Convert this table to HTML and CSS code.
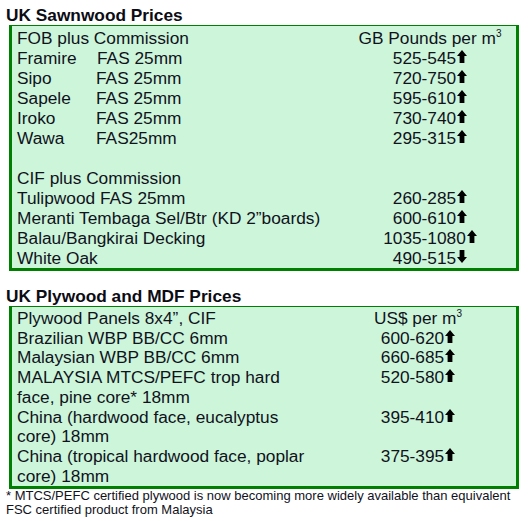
FILE: index.html
```html
<!DOCTYPE html>
<html>
<head>
<meta charset="utf-8">
<link rel="stylesheet" href="styles.css">
</head>
<body>
<svg width="0" height="0" class="defs">
  <defs>
    <symbol id="up" viewBox="0 0 10 13"><path d="M5 0 L10 6 L7.4 6 L7.4 13 L2.6 13 L2.6 6 L0 6 Z"/></symbol>
    <symbol id="down" viewBox="0 0 10 13"><path d="M2.6 0 L7.4 0 L7.4 7 L10 7 L5 13 L0 7 L2.6 7 Z"/></symbol>
  </defs>
</svg>

<h2 class="title">UK Sawnwood Prices</h2>
<div class="box box-saw">
  <div class="row"><span class="span2">FOB plus Commission</span><span class="price">GB Pounds per m<sup class="sup">3</sup></span></div>
  <div class="row"><span>Framire</span><span class="grade grade-f">FAS 25mm</span><span class="price">525-545<svg class="arr"><use href="#up"/></svg></span></div>
  <div class="row"><span>Sipo</span><span class="grade">FAS 25mm</span><span class="price">720-750<svg class="arr"><use href="#up"/></svg></span></div>
  <div class="row"><span>Sapele</span><span class="grade">FAS 25mm</span><span class="price">595-610<svg class="arr"><use href="#up"/></svg></span></div>
  <div class="row"><span>Iroko</span><span class="grade">FAS 25mm</span><span class="price">730-740<svg class="arr"><use href="#up"/></svg></span></div>
  <div class="row"><span>Wawa</span><span class="grade">FAS25mm</span><span class="price">295-315<svg class="arr"><use href="#up"/></svg></span></div>
  <div class="row blank"><span class="span2">&nbsp;</span><span class="price"></span></div>
  <div class="row"><span class="span2">CIF plus Commission</span><span class="price"></span></div>
  <div class="row"><span class="span2">Tulipwood FAS 25mm</span><span class="price">260-285<svg class="arr"><use href="#up"/></svg></span></div>
  <div class="row"><span class="span2">Meranti Tembaga Sel/Btr (KD 2”boards)</span><span class="price">600-610<svg class="arr"><use href="#up"/></svg></span></div>
  <div class="row"><span class="span2">Balau/Bangkirai Decking</span><span class="price">1035-1080<svg class="arr"><use href="#up"/></svg></span></div>
  <div class="row"><span class="span2">White Oak</span><span class="price">490-515<svg class="arr"><use href="#down"/></svg></span></div>
</div>

<h2 class="title title-ply">UK Plywood and MDF Prices</h2>
<div class="box box-ply">
  <div class="prow"><span>Plywood Panels 8x4”, CIF</span><span class="price">US$ per m<sup class="sup">3</sup></span></div>
  <div class="prow"><span>Brazilian WBP BB/CC 6mm</span><span class="price">600-620<svg class="arr"><use href="#up"/></svg></span></div>
  <div class="prow"><span>Malaysian WBP BB/CC 6mm</span><span class="price">660-685<svg class="arr"><use href="#up"/></svg></span></div>
  <div class="prow"><span>MALAYSIA MTCS/PEFC trop hard face, pine core* 18mm</span><span class="price">520-580<svg class="arr"><use href="#up"/></svg></span></div>
  <div class="prow"><span>China (hardwood face, eucalyptus core) 18mm</span><span class="price">395-410<svg class="arr"><use href="#up"/></svg></span></div>
  <div class="prow"><span>China (tropical hardwood face, poplar core) 18mm</span><span class="price">375-395<svg class="arr"><use href="#up"/></svg></span></div>
</div>
<p class="note">* MTCS/PEFC certified plywood is now becoming more widely available than equivalent FSC certified product from Malaysia</p>
</body>
</html>
```

FILE: styles.css
```css
html, body {
  margin: 0;
  padding: 0;
  background: #ffffff;
}
body {
  padding-top: 5px;
  font-family: "Liberation Sans", Arial, sans-serif;
  color: #10121c;
}
.defs {
  position: absolute;
  width: 0;
  height: 0;
}
.title {
  margin: 0;
  padding-left: 6px;
  font-size: 17.3px;
  line-height: 20px;
  font-weight: bold;
  color: #0c0c14;
}
.title-ply {
  margin-top: 15px;
}
.box {
  margin-left: 9px;
  width: 510px;
  box-sizing: border-box;
  border: 3px solid #008000;
  border-top-width: 1px;
  background: #cdf5da;
  padding: 2px 0 0 5px;
  font-size: 17.3px;
  line-height: 20px;
}
.box-ply {
  line-height: 19.7px;
}
.row {
  display: grid;
  grid-template-columns: 79px 248px 172px;
}
.span2 {
  grid-column: span 2;
}
.grade-f {
  padding-left: 1px;
}
.prow {
  display: grid;
  grid-template-columns: 303px 196px;
  align-items: start;
}
.price {
  text-align: center;
  white-space: nowrap;
}
.sup {
  font-size: 10px;
  line-height: 0;
  vertical-align: 7px;
}
.arr {
  width: 10px;
  height: 13px;
  margin-left: 1px;
  vertical-align: 1px;
  fill: #000000;
}
.note {
  margin: 0;
  padding-left: 6px;
  font-size: 13px;
  line-height: 14px;
}
```
